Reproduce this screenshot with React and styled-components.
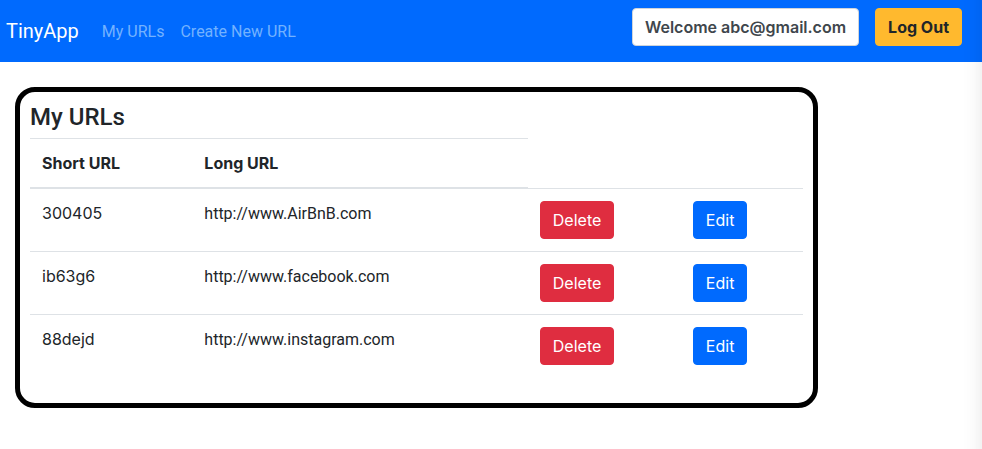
import React from "react";
import styled, { createGlobalStyle } from "styled-components";

const GlobalStyle = createGlobalStyle`
  *, *::before, *::after { box-sizing: border-box; }
  body {
    margin: 0;
    background: #fff;
    color: #212529;
    font: 400 16px/26px Roboto, "Liberation Sans", sans-serif;
  }
`;

const EdgeShade = styled.div`
  position: fixed;
  inset: 0 0 0 auto;
  width: 20px;
  background: linear-gradient(to right, rgba(0, 0, 0, 0), rgba(0, 0, 0, 0.01) 50%, rgba(0, 0, 0, 0.05));
  pointer-events: none;
`;

const Navbar = styled.nav`
  display: flex;
  align-items: center;
  min-height: 62px;
  padding: 0 20px 8px 6px;
  background: #006afe;
`;

const Brand = styled.a`
  margin: 8px 15px 0 0;
  color: #fff;
  font-size: 20px;
  line-height: 30px;
  text-decoration: none;
`;

const NavLinks = styled.div`
  display: flex;
  flex: 1;
  margin-top: 10px;
`;

const NavLink = styled.a`
  padding: 0 8px;
  color: #73b2ff;
  text-decoration: none;
  white-space: nowrap;
`;

const Session = styled.form`
  display: flex;
  gap: 16px;
`;

const variants = {
  light: "background: #fff; color: #40464c; border-color: #ced4da; font-weight: 600;",
  warning: "background: #ffb92e; color: #212529; border-color: #ffb92e; font-weight: 700;",
  danger: "background: #df2d40; color: #fff; border-color: #df2d40;",
  primary: "background: #006afe; color: #fff; border-color: #006afe;",
};

const Button = styled.button`
  height: 38px;
  padding: 0 12px;
  border: 1px solid;
  border-radius: 4px;
  font: 400 16px/24px Inter, sans-serif;
  white-space: nowrap;
  cursor: pointer;
  ${(p) => variants[p.$variant]}
`;

const Main = styled.main`
  padding: 25px 164px 0 15px;
`;

const Panel = styled.section`
  padding: 10px 10px 25px;
  border: 5px solid #000;
  border-radius: 20px;
`;

const Title = styled.h1`
  margin: 0 0 5px;
  font-size: 24px;
  font-weight: 500;
  line-height: 31px;
`;

const Table = styled.table`
  width: 100%;
  table-layout: fixed;
  border-collapse: collapse;
`;

const Column = styled.col`
  width: ${(p) => p.$width};
`;

const HeadCell = styled.th`
  height: 50px;
  padding: 0 12px 2px;
  border-top: 1px solid #dee2e6;
  box-shadow: inset 0 -1px #dee2e6;
  font-family: Inter, sans-serif;
  font-weight: 700;
  text-align: left;
`;

const Cell = styled.td`
  height: 63px;
  padding: 12px;
  border-top: 1px solid #dee2e6;
  vertical-align: top;
`;

const IdCell = styled(Cell)`
  font-family: Inter, sans-serif;
  line-height: 24px;
`;

const urls = [
  { id: "300405", longURL: "http://www.AirBnB.com" },
  { id: "ib63g6", longURL: "http://www.facebook.com" },
  { id: "88dejd", longURL: "http://www.instagram.com" },
];

export default function App() {
  return (
    <>
      <GlobalStyle />
      <Navbar>
        <Brand href="#">TinyApp</Brand>
        <NavLinks>
          <NavLink href="#urls">My URLs</NavLink>
          <NavLink href="#new">Create New URL</NavLink>
        </NavLinks>
        <Session onSubmit={(e) => e.preventDefault()}>
          <Button type="button" $variant="light">Welcome abc@gmail.com</Button>
          <Button type="submit" $variant="warning">Log Out</Button>
        </Session>
      </Navbar>
      <Main>
        <Panel>
          <Title>My URLs</Title>
          <Table>
            <colgroup>
              <Column $width="21%" />
              <Column $width="43.4%" />
              <Column $width="19.8%" />
              <Column />
            </colgroup>
            <thead>
              <tr>
                <HeadCell scope="col">Short URL</HeadCell>
                <HeadCell scope="col">Long URL</HeadCell>
              </tr>
            </thead>
            <tbody>
              {urls.map((url) => (
                <tr key={url.id}>
                  <IdCell>{url.id}</IdCell>
                  <Cell>{url.longURL}</Cell>
                  <Cell><Button type="button" $variant="danger">Delete</Button></Cell>
                  <Cell><Button type="button" $variant="primary">Edit</Button></Cell>
                </tr>
              ))}
            </tbody>
          </Table>
        </Panel>
      </Main>
      <EdgeShade />
    </>
  );
}
